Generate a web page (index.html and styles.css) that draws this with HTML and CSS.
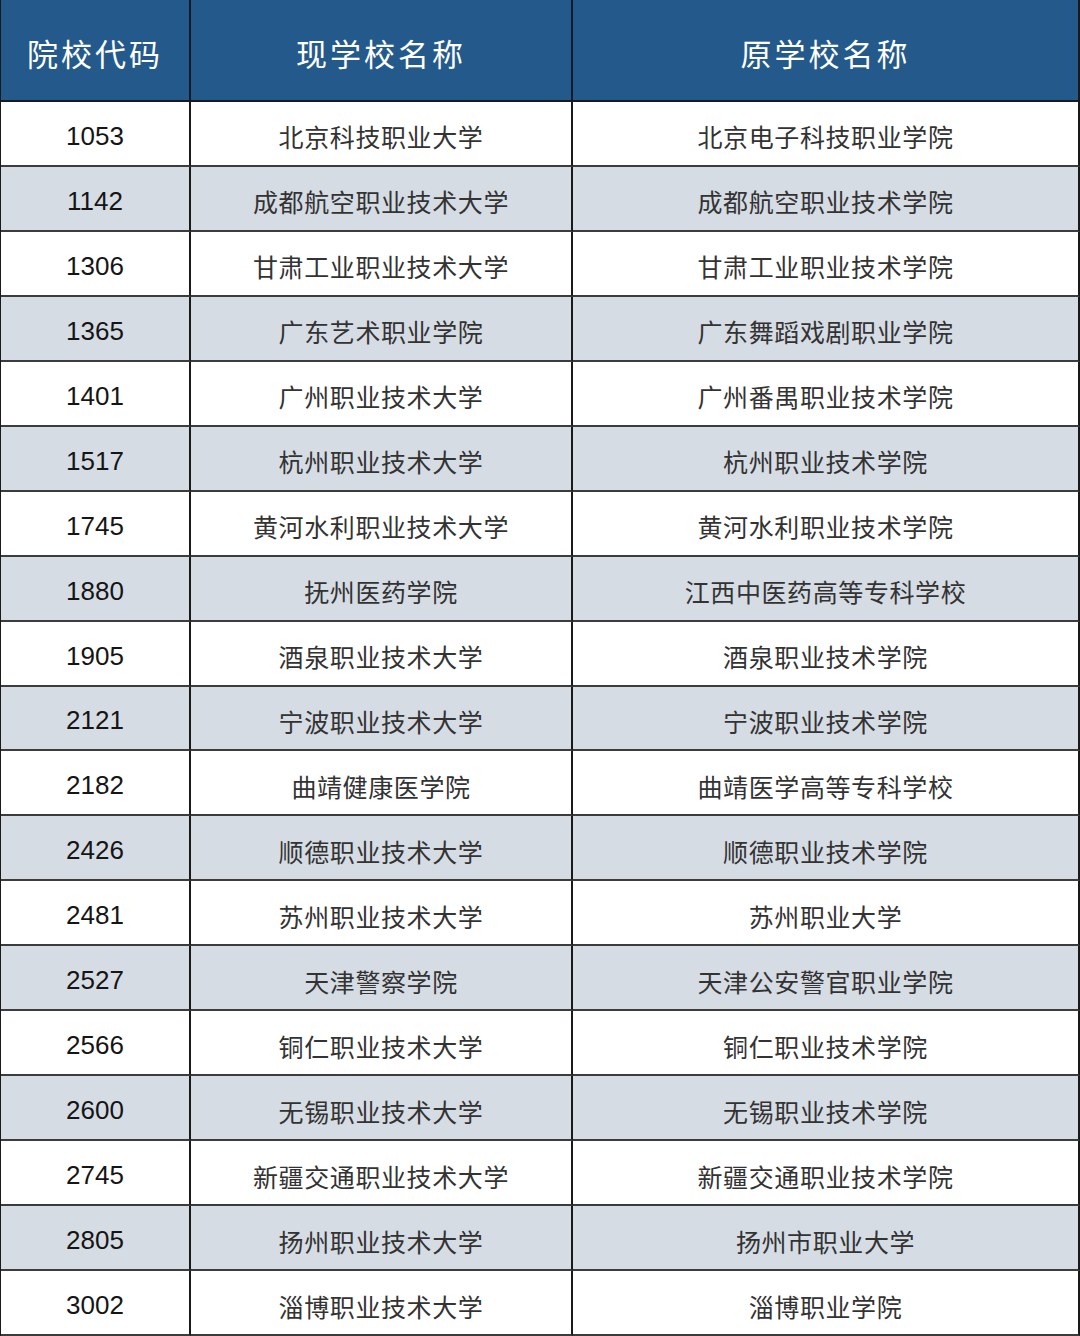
FILE: index.html
```html
<!DOCTYPE html>
<html lang="zh-CN">
<head>
<meta charset="utf-8">
<title>院校代码</title>
<link rel="stylesheet" href="styles.css">
</head>
<body>
<div class="table">
  <div class="cell head">院校代码</div>
  <div class="cell head">现学校名称</div>
  <div class="cell head last">原学校名称</div>

  <div class="cell num">1053</div><div class="cell name">北京科技职业大学</div><div class="cell name last">北京电子科技职业学院</div>
  <div class="cell num alt">1142</div><div class="cell name alt">成都航空职业技术大学</div><div class="cell name alt last">成都航空职业技术学院</div>
  <div class="cell num">1306</div><div class="cell name">甘肃工业职业技术大学</div><div class="cell name last">甘肃工业职业技术学院</div>
  <div class="cell num alt">1365</div><div class="cell name alt">广东艺术职业学院</div><div class="cell name alt last">广东舞蹈戏剧职业学院</div>
  <div class="cell num">1401</div><div class="cell name">广州职业技术大学</div><div class="cell name last">广州番禺职业技术学院</div>
  <div class="cell num alt">1517</div><div class="cell name alt">杭州职业技术大学</div><div class="cell name alt last">杭州职业技术学院</div>
  <div class="cell num">1745</div><div class="cell name">黄河水利职业技术大学</div><div class="cell name last">黄河水利职业技术学院</div>
  <div class="cell num alt">1880</div><div class="cell name alt">抚州医药学院</div><div class="cell name alt last">江西中医药高等专科学校</div>
  <div class="cell num">1905</div><div class="cell name">酒泉职业技术大学</div><div class="cell name last">酒泉职业技术学院</div>
  <div class="cell num alt">2121</div><div class="cell name alt">宁波职业技术大学</div><div class="cell name alt last">宁波职业技术学院</div>
  <div class="cell num">2182</div><div class="cell name">曲靖健康医学院</div><div class="cell name last">曲靖医学高等专科学校</div>
  <div class="cell num alt">2426</div><div class="cell name alt">顺德职业技术大学</div><div class="cell name alt last">顺德职业技术学院</div>
  <div class="cell num">2481</div><div class="cell name">苏州职业技术大学</div><div class="cell name last">苏州职业大学</div>
  <div class="cell num alt">2527</div><div class="cell name alt">天津警察学院</div><div class="cell name alt last">天津公安警官职业学院</div>
  <div class="cell num">2566</div><div class="cell name">铜仁职业技术大学</div><div class="cell name last">铜仁职业技术学院</div>
  <div class="cell num alt">2600</div><div class="cell name alt">无锡职业技术大学</div><div class="cell name alt last">无锡职业技术学院</div>
  <div class="cell num">2745</div><div class="cell name">新疆交通职业技术大学</div><div class="cell name last">新疆交通职业技术学院</div>
  <div class="cell num alt">2805</div><div class="cell name alt">扬州职业技术大学</div><div class="cell name alt last">扬州市职业大学</div>
  <div class="cell num">3002</div><div class="cell name">淄博职业技术大学</div><div class="cell name last">淄博职业学院</div>
</div>
</body>
</html>
```

FILE: styles.css
```css
html, body {
  margin: 0;
  padding: 0;
  background: #ffffff;
}
.table {
  width: 1080px;
  height: 1336px;
  box-sizing: border-box;
  border-left: 1px solid #1a1a1a;
  display: grid;
  grid-template-columns: 190px 382px 507px;
  grid-template-rows: 102px repeat(19, 1fr);
}
.cell {
  box-sizing: border-box;
  display: flex;
  align-items: center;
  justify-content: center;
  border-right: 2px solid #1a1a1a;
  border-bottom: 2px solid #3c3c3c;
  background: #ffffff;
  white-space: nowrap;
  padding-top: 6px;
}
.cell.last {
  border-right: 2px solid #1a1a1a;
}
.head {
  background: #245a8b;
  color: #ffffff;
  font-family: "Noto Sans CJK SC", sans-serif;
  font-size: 31px;
  letter-spacing: 3px;
  border-right-color: #0f1a26;
  border-bottom-color: #1a1a1a;
  padding-top: 4px;
}
.num {
  font-family: "Liberation Sans", Arial, sans-serif;
  font-size: 26px;
  color: #151515;
}
.name {
  font-family: "Noto Sans CJK SC", sans-serif;
  font-size: 25px;
  color: #333333;
  letter-spacing: 0.6px;
}
.alt {
  background: #d6dce4;
}
```
